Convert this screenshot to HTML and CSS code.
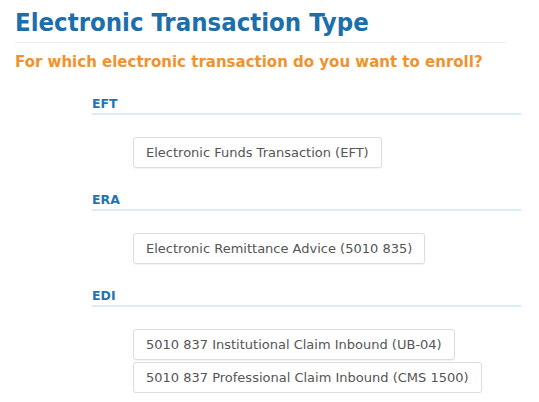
FILE: index.html
```html
<!DOCTYPE html>
<html>
<head>
<meta charset="utf-8">
<link rel="stylesheet" href="styles.css">
</head>
<body>
<div class="page">
  <h1 class="title">Electronic Transaction Type</h1>
  <p class="question">For which electronic transaction do you want to enroll?</p>
  <div class="section">
    <div class="label">EFT</div>
    <div class="options">
      <button class="opt">Electronic Funds Transaction (EFT)</button>
    </div>
  </div>
  <div class="section">
    <div class="label">ERA</div>
    <div class="options">
      <button class="opt">Electronic Remittance Advice (5010 835)</button>
    </div>
  </div>
  <div class="section">
    <div class="label">EDI</div>
    <div class="options">
      <button class="opt">5010 837 Institutional Claim Inbound (UB-04)</button>
      <button class="opt">5010 837 Professional Claim Inbound (CMS 1500)</button>
    </div>
  </div>
</div>
</body>
</html>
```

FILE: styles.css
```css
html, body {
  margin: 0;
  padding: 0;
  background: #ffffff;
}
.page {
  padding: 6px 33px 0 15px;
  font-family: "DejaVu Sans", sans-serif;
}
.title {
  margin: 0;
  font-family: "DejaVu Sans Condensed", "DejaVu Sans", sans-serif;
  font-size: 25.5px;
  line-height: 32px;
  font-weight: bold;
  color: #1c6fab;
  padding-bottom: 4px;
  border-bottom: 1px solid #eeeeee;
}
.question {
  margin: 9px 0 0 0;
  font-size: 15px;
  line-height: 20px;
  font-weight: bold;
  color: #f0922e;
}
.section {
  margin-left: 77px;
  margin-right: -15px;
}
.label {
  font-size: 12.5px;
  line-height: 14px;
  font-weight: bold;
  color: #1f75b3;
  padding-bottom: 2px;
  border-bottom: 2px solid #dcebf8;
  margin-top: 25px;
}
.options {
  display: flex;
  flex-direction: column;
  align-items: flex-start;
  gap: 2px;
  margin-top: 22px;
  padding-left: 41px;
}
.opt {
  font-family: "DejaVu Sans", sans-serif;
  font-size: 13px;
  line-height: 17px;
  padding: 6px 12px;
  color: #555555;
  background: #ffffff;
  border: 1px solid #dddddd;
  border-radius: 3px;
  box-shadow: 0 1px 1px rgba(0,0,0,0.05);
}
```
